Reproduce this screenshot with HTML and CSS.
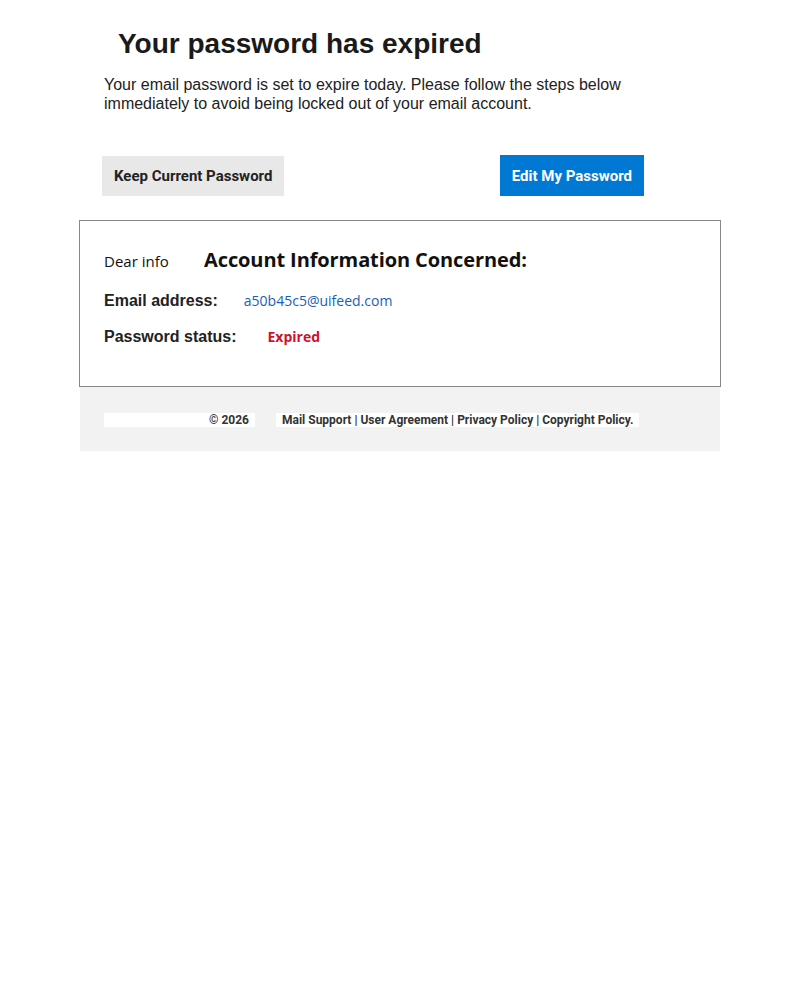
FILE: index.html
```html
<!DOCTYPE html>
<html>
<head>
<meta charset="utf-8">
<link rel="stylesheet" href="styles.css">
</head>
<body>
<div class="wrap">
  <h1 class="title">Your password has expired</h1>
  <p class="intro">Your email password is set to expire today. Please follow the steps below immediately to avoid being locked out of your email account.</p>
  <div class="actions">
    <span class="btn btn-grey">Keep Current Password</span>
    <span class="btn btn-blue">Edit My Password</span>
  </div>
  <div class="box">
    <div class="greet"><span class="dear">Dear info</span><span class="concern">Account Information Concerned:</span></div>
    <div class="row"><span class="label">Email address:</span><span class="email">a50b45c5@uifeed.com</span></div>
    <div class="row"><span class="label">Password status:</span><span class="status">Expired</span></div>
  </div>
  <div class="footer">
    <span class="copy">© 2026</span>
    <span class="links">Mail Support | User Agreement | Privacy Policy | Copyright Policy.</span>
  </div>
</div>
</body>
</html>
```
FILE: styles.css
```css
html, body { margin: 0; padding: 0; background: #fff; }
.wrap { width: 640px; margin: 0 0 0 80px; font-family: "Liberation Sans", Arial, sans-serif; color: #222; }
.title { margin: 0; padding: 27px 0 0 38px; font-size: 28px; line-height: 34px; font-weight: bold; color: #1a1a1a; }
.intro { margin: 0; padding: 14px 0 0 24px; width: 530px; font-size: 16px; line-height: 19px; color: #222; }
.actions { display: flex; justify-content: space-between; width: 542px; margin: 43px 0 0 22px; }
.btn { display: inline-flex; align-items: center; height: 40px; padding: 0 12px; font-family: Roboto, sans-serif; font-weight: bold; font-size: 15px; box-sizing: border-box; }
.btn-grey { background: #e8e8e8; color: #222; }
.btn-blue { background: #0078d4; color: #fff; height: 41px; margin-top: -1px; }
.box { margin: 24px 0 0 -1px; width: 642px; height: 167px; border: 1px solid #888; padding: 25px 24px 0; box-sizing: border-box; }
.greet { display: flex; align-items: baseline; }
.dear { font-family: "Open Sans", sans-serif; font-size: 15px; color: #111; width: 100px; }
.concern { font-family: "Open Sans", sans-serif; font-weight: bold; font-size: 20px; color: #111; letter-spacing: -0.1px; }
.row { display: flex; align-items: baseline; margin-top: 18px; }
.row + .row { margin-top: 17px; }
.label { font-weight: bold; font-size: 16px; color: #222; }
.email { margin-left: 26px; font-family: "Open Sans", sans-serif; font-size: 14px; color: #1a5eb8; }
.status { margin-left: 31px; font-family: "Open Sans", sans-serif; font-size: 14px; font-weight: bold; color: #d0102e; }
.footer { background: #f2f2f2; height: 64px; display: flex; align-items: center; padding: 2px 24px 0; box-sizing: border-box; font-family: Roboto, sans-serif; font-weight: bold; font-size: 12px; color: #333; }
.copy { background: #fff; width: 151px; text-align: right; padding: 0 6px 0 0; box-sizing: border-box; line-height: 14px; }
.links { background: #fff; margin-left: 21px; padding: 0 6px; line-height: 14px; }
```
